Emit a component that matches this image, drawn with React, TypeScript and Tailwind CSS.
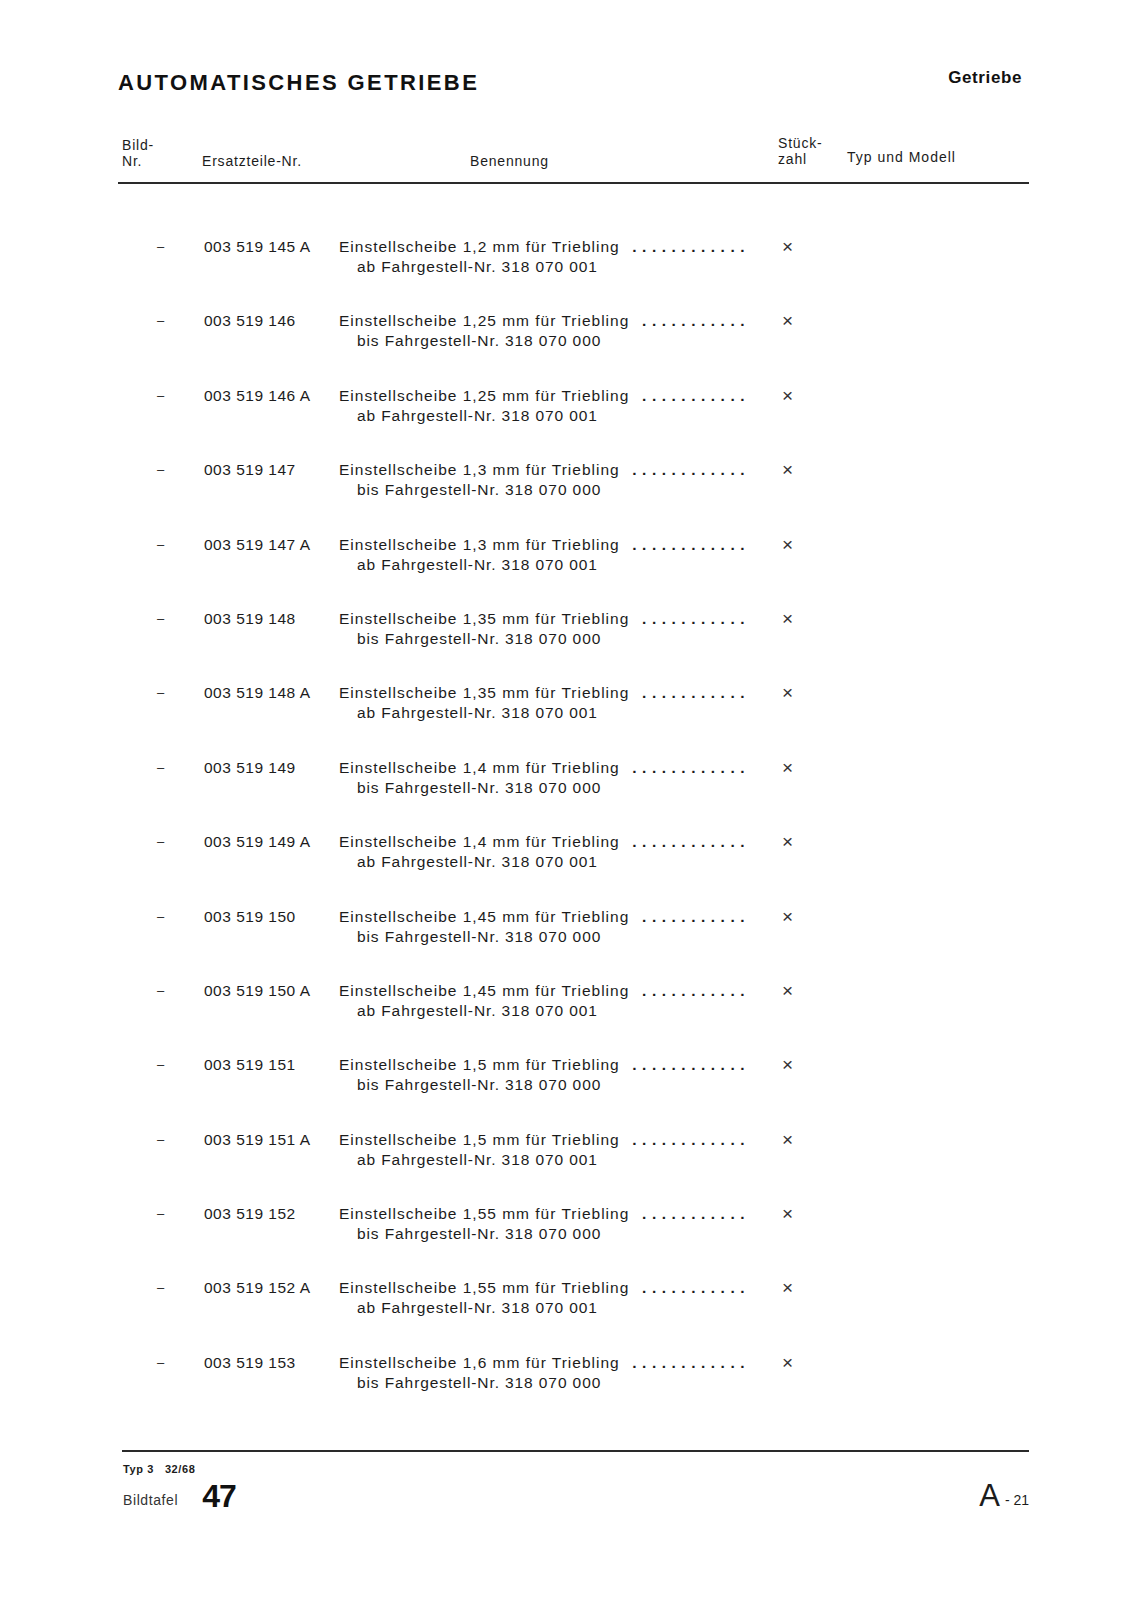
import React from 'react';

type Row = { nr: string; mm: string; from: boolean };

const rows: Row[] = [
  { nr: '003 519 145 A', mm: '1,2', from: true },
  { nr: '003 519 146', mm: '1,25', from: false },
  { nr: '003 519 146 A', mm: '1,25', from: true },
  { nr: '003 519 147', mm: '1,3', from: false },
  { nr: '003 519 147 A', mm: '1,3', from: true },
  { nr: '003 519 148', mm: '1,35', from: false },
  { nr: '003 519 148 A', mm: '1,35', from: true },
  { nr: '003 519 149', mm: '1,4', from: false },
  { nr: '003 519 149 A', mm: '1,4', from: true },
  { nr: '003 519 150', mm: '1,45', from: false },
  { nr: '003 519 150 A', mm: '1,45', from: true },
  { nr: '003 519 151', mm: '1,5', from: false },
  { nr: '003 519 151 A', mm: '1,5', from: true },
  { nr: '003 519 152', mm: '1,55', from: false },
  { nr: '003 519 152 A', mm: '1,55', from: true },
  { nr: '003 519 153', mm: '1,6', from: false },
];

const dots = '.'.repeat(40);

const PartRow: React.FC<{ row: Row }> = ({ row }) => (
  <div className="flex h-[74.4px] text-[15.5px] leading-[20px]">
    {/* Bild-Nr. */}
    <div className="w-[86px] pl-[39px] text-[13px]">–</div>
    {/* Ersatzteile-Nr. */}
    <div className="w-[135px] tracking-[0.5px]">{row.nr}</div>
    {/* Benennung */}
    <div className="w-[411px]">
      <div className="flex">
        <span className="whitespace-nowrap tracking-[1px]">
          Einstellscheibe {row.mm} mm für Triebling
        </span>
        <span className="ml-[8px] flex flex-1 justify-end overflow-hidden whitespace-nowrap">
          <span className="shrink-0 font-bold tracking-[5.5px]">{dots}</span>
        </span>
      </div>
      <div className="pl-[18px] tracking-[0.9px]">
        {row.from ? 'ab' : 'bis'} Fahrgestell-Nr. {row.from ? '318 070 001' : '318 070 000'}
      </div>
    </div>
    {/* Stückzahl */}
    <div className="pl-[32px] text-[19px] leading-[20px] text-[#333]">×</div>
  </div>
);

const App: React.FC = () => {
  return (
    <div className="min-h-[1600px] bg-white font-['Liberation_Sans',Arial,sans-serif] text-[#1c1c1c]">
      <div className="pl-[118px] pr-[112px] pt-[71px]">
        {/* Title */}
        <div className="flex items-start justify-between">
          <h1 className="text-[22px] font-bold leading-[24px] tracking-[2.4px] text-[#111]">
            AUTOMATISCHES GETRIEBE
          </h1>
          <span className="mr-[7px] -mt-[3px] text-[17px] font-bold leading-[20px] tracking-[0.6px] text-[#111]">
            Getriebe
          </span>
        </div>

        {/* Column header */}
        <div className="mt-[42px] flex items-end pb-[13px] text-[14px] leading-[16px] tracking-[0.8px]">
          <div className="w-[84px] pl-[4px]">
            <div>Bild-</div>
            <div>Nr.</div>
          </div>
          <div className="w-[268px]">Ersatzteile-Nr.</div>
          <div className="w-[308px]">Benennung</div>
          <div className="w-[69px] -translate-y-[2px]">
            <div>Stück-</div>
            <div>zahl</div>
          </div>
          <div className="mb-[4px] tracking-[1px]">Typ und Modell</div>
        </div>
        <div className="h-[2px] bg-[#2a2a2a]" />

        {/* Rows */}
        <div className="mt-[53px]">
          {rows.map(r => (
            <PartRow key={r.nr} row={r} />
          ))}
        </div>

        {/* Footer */}
        <div className="ml-[4px] mt-[23px] h-[1.5px] bg-[#2a2a2a]" />
        <div className="ml-[5px] mt-[11px] flex items-end justify-between">
          <div>
            <div className="text-[11px] font-bold leading-[12px] tracking-[0.6px]">
              Typ 3&nbsp;&nbsp; 32/68
            </div>
            <div className="mt-[6px] flex items-end">
              <span className="mb-[3px] text-[14px] leading-[16px] tracking-[0.6px] text-[#333]">Bildtafel</span>
              <span className="ml-[24px] text-[32px] font-bold leading-[30px] tracking-[-1px] text-[#111]">47</span>
            </div>
          </div>
          <div className="flex items-end">
            <span className="text-[31px] font-light leading-[30px]">A</span>
            <span className="mb-[3px] ml-[5px] text-[14px] leading-[16px]">- 21</span>
          </div>
        </div>
      </div>
    </div>
  );
};

export default App;
